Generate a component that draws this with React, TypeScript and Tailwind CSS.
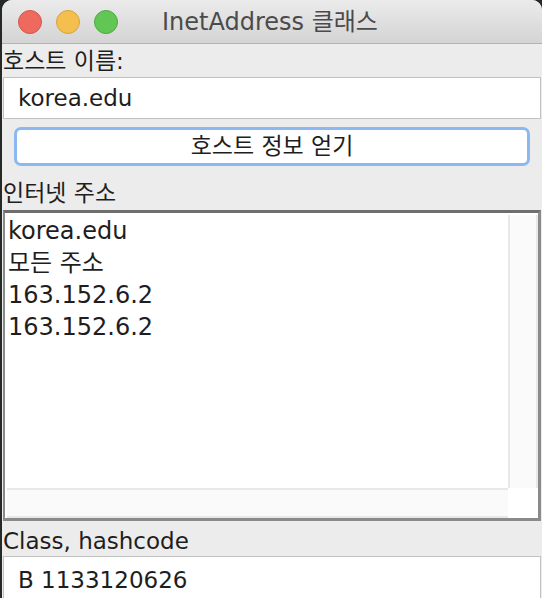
const font = "font-['Lucida_Grande','DejaVu_Sans','Noto_Sans_CJK_KR',sans-serif]";

const App = () => {
  return (
    <div className={`w-[542px] h-[598px] bg-[#262a26] overflow-hidden ${font}`}>
      <div className="ml-[2px] h-full bg-[#ececec] rounded-tl-[10px] rounded-tr-[10px] flex flex-col">
        {/* title bar */}
        <div className="h-[44px] shrink-0 rounded-t-[10px] bg-gradient-to-b from-[#ebebeb] to-[#d4d4d4] border-b border-[#b3b3b3] flex items-center relative">
          <div className="flex items-center gap-[14px] pl-[16px]">
            <span className="w-[24px] h-[24px] rounded-full bg-[#ee6a5f] border border-[#d8554a]" />
            <span className="w-[24px] h-[24px] rounded-full bg-[#f5bf4f] border border-[#d9a23a]" />
            <span className="w-[24px] h-[24px] rounded-full bg-[#62c655] border border-[#4ea943]" />
          </div>
          <div className="absolute left-0 right-0 top-0 h-full flex items-center justify-center text-[24px] text-[#4b4b4b] pr-[4px]">
            InetAddress 클래스
          </div>
        </div>

        {/* host name */}
        <div className="h-[33px] shrink-0 flex items-center text-[23px] text-[#1e1e1e] pl-[1px] pt-[2px]">호스트 이름:</div>
        <div className="h-[42px] shrink-0 mx-[1px] bg-white border border-[#c2c2c2] flex items-center pl-[14px] text-[23px] text-[#1e1e1e]">
          korea.edu
        </div>
        <div className="px-[12px] pt-[8px]">
          <button className="w-full h-[39px] rounded-[7px] bg-white border-[3px] border-[#8bb8f0] text-[23px] text-[#1e1e1e] flex items-center justify-center">
            호스트 정보 얻기
          </button>
        </div>

        {/* internet address */}
        <div className="h-[44px] shrink-0 flex items-center text-[23px] text-[#1e1e1e] pl-[1px] pt-[10px]">인터넷 주소</div>
        <div className="h-[311px] shrink-0 mx-[1px] bg-white border-t-[3px] border-l-[2px] border-r-[3px] border-b-[3px] border-[#8a8a8a] border-t-[#6e6e6e] flex flex-col">
          <div className="flex flex-1 min-h-0">
            <div className="flex-1 pl-[3px] pt-[2px] text-[24px] leading-[32px] text-[#1e1e1e]">
              <div>korea.edu</div>
              <div>모든 주소</div>
              <div>163.152.6.2</div>
              <div>163.152.6.2</div>
            </div>
            <div className="w-[30px] mt-[2px] bg-[#fafafa] border-l-[2px] border-r-[2px] border-[#e8e8e8]" />
          </div>
          <div className="h-[30px] flex shrink-0">
            <div className="flex-1 ml-[2px] bg-[#fafafa] border-t-[2px] border-b-[2px] border-[#e8e8e8]" />
            <div className="w-[30px] bg-white" />
          </div>
        </div>

        {/* class, hashcode */}
        <div className="h-[35px] shrink-0 flex items-center text-[23px] text-[#1e1e1e] pl-[1px] pt-[5px]">Class, hashcode</div>
        <div className="flex-1 mx-[1px] bg-white border border-[#c2c2c2] flex items-start pt-[6px] pl-[14px] text-[23px] text-[#1e1e1e]">
          B 1133120626
        </div>
      </div>
    </div>
  );
};

export default App;
